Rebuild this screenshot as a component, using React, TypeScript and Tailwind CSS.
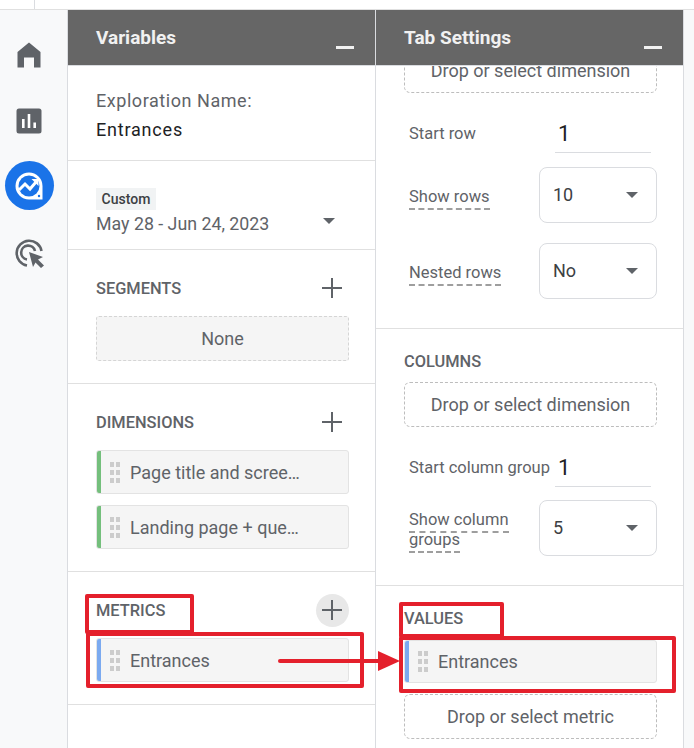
import React from 'react';

const HomeIcon = () => (
  <svg width="24" height="26" viewBox="0 0 24 26" className="text-[#5f6368]">
    <path fill="currentColor" d="M12 0.5 L23.5 10 V25.5 H17 V15.5 H7 V25.5 H0.5 V10 Z" />
  </svg>
);

const ReportsIcon = () => (
  <svg width="26" height="26" viewBox="0 0 26 26">
    <rect x="0.5" y="0.5" width="25" height="25" rx="2.5" fill="#5f6368" />
    <rect x="6" y="11" width="2.6" height="9" fill="#fff" />
    <rect x="11.7" y="6" width="2.6" height="14" fill="#fff" />
    <rect x="17.4" y="14.5" width="2.6" height="5.5" fill="#fff" />
  </svg>
);

const ExploreIcon = () => (
  <svg width="28" height="28" viewBox="0 0 28 28">
    <path fill="#fff" d="M14 0.5 A13.5 13.5 0 0 1 27.5 14 V27.5 H14 A13.5 13.5 0 0 1 14 0.5 Z" />
    <circle cx="14" cy="14" r="10.5" fill="#1a73e8" />
    <path d="M4 18 L10 12 L15 17 L21 10" fill="none" stroke="#fff" strokeWidth="3" />
    <path fill="#fff" d="M16.5 7 H23.5 V14 Z" />
    <circle cx="24" cy="24" r="1.2" fill="#1a73e8" />
  </svg>
);

const AdvertisingIcon = () => (
  <svg width="30" height="30" viewBox="0 0 30 30">
    <path d="M13 27.5 A12.5 12.5 0 1 1 27.5 13" fill="none" stroke="#5f6368" strokeWidth="2.6" />
    <path d="M13 21.5 A7 7 0 1 1 21 13" fill="none" stroke="#5f6368" strokeWidth="2.6" />
    <path fill="#5f6368" d="M15 14 L29 19 L24 21.5 L30 27.5 L27 30 L21.5 24.5 L19 29 Z" />
  </svg>
);

const PlusIcon = () => (
  <svg width="20" height="20" viewBox="0 0 20 20" className="text-[#5f6368]">
    <rect x="0" y="9" width="20" height="2" fill="currentColor" />
    <rect x="9" y="0" width="2" height="20" fill="currentColor" />
  </svg>
);

const Caret = () => (
  <div className="w-0 h-0 border-x-[6.5px] border-x-transparent border-t-[6px] border-t-[#5f6368]" />
);

const DragHandle = () => (
  <div className="grid grid-cols-2 gap-x-[2px] gap-y-[3px] w-[10px] shrink-0">
    {[0, 1, 2, 3, 4, 5].map((i) => (
      <div key={i} className="w-[4px] h-[5px] bg-[#cccccc]" />
    ))}
  </div>
);

const Chip = ({ label, accent, height = 'h-[44px]' }: { label: string; accent: string; height?: string }) => (
  <div className={`flex items-center ${height} w-[253px] bg-[#f5f5f5] border border-[#e3e3e3] rounded-[3px] overflow-hidden`}>
    <div className={`w-[4px] h-full shrink-0 ${accent}`} />
    <div className="ml-[9px] mr-[10px]">
      <DragHandle />
    </div>
    <span className="text-[18px] text-[#5f6368] whitespace-nowrap">{label}</span>
  </div>
);

const PanelHeader = ({ title, z }: { title: string; z?: string }) => (
  <div className={`relative flex h-[56px] bg-[#666666] border-b border-[#dadce0] shrink-0 pl-[28px] ${z ?? ''}`}>
    <span className="mt-[16px] text-[19px] leading-[24px] font-bold text-[#f1f1f1]">{title}</span>
    <div className="absolute left-[268px] top-[36px] w-[18px] h-[3px] bg-[#f1f1f1]" />
  </div>
);

const SectionTitle = ({ children }: { children: React.ReactNode }) => (
  <h3 className="pt-[2px] text-[16.4px] leading-[20px] font-medium text-[#5f6368]">{children}</h3>
);

const DropBox = ({ label }: { label: string }) => (
  <div className="flex items-center justify-center w-[253px] h-[45px] border border-dashed border-[#bdbdbd] rounded-[6px] text-[18px] text-[#5f6368]">
    {label}
  </div>
);

const NumberRow = ({ label, className }: { label: string; className?: string }) => (
  <div className={`flex pl-[5px] h-[39px] ${className ?? ''}`}>
    <span className="w-[146px] pt-[8px] text-[16.5px] leading-[24px] text-[#5f6368] whitespace-nowrap">{label}</span>
    <div className="w-[96px] h-[39px] border-b border-[#dadce0] pl-[3px] text-[22px] leading-[40px] text-[#202124]">1</div>
  </div>
);

const SelectBox = ({ value }: { value: string }) => (
  <div className="flex items-center justify-between w-[118px] h-[56px] border border-[#dadce0] rounded-[8px] pl-[13px] pr-[18px] text-[18px] text-[#3c4043]">
    <span className="-mt-[2px]">{value}</span>
    <Caret />
  </div>
);

const DashedLabel = ({ children }: { children: React.ReactNode }) => (
  <span className="border-b-2 border-dashed border-[#9e9e9e] pb-[2px] text-[16.5px] leading-[18px] text-[#5f6368]">{children}</span>
);

export default function App() {
  return (
    <div className="relative w-[694px] h-[748px] overflow-hidden bg-white font-['Roboto',sans-serif]">
      <div className="h-[10px] border-b border-[#e0e0e0] flex">
        <div className="ml-[34px] w-px h-full bg-[#dadce0]" />
      </div>

      <div className="flex h-[738px]">
        {/* nav rail */}
        <nav className="w-[68px] shrink-0 bg-[#f8f9fa] border-r border-[#dadce0] flex flex-col items-center pr-[9px]">
          <div className="mt-[32px]">
            <HomeIcon />
          </div>
          <div className="mt-[40px]">
            <ReportsIcon />
          </div>
          <div className="mt-[27px] w-[49px] h-[49px] rounded-full bg-[#1a73e8] flex items-center justify-center">
            <ExploreIcon />
          </div>
          <div className="mt-[28px]">
            <AdvertisingIcon />
          </div>
        </nav>

        {/* variables */}
        <section className="w-[308px] shrink-0 border-r border-[#dadce0] flex flex-col">
          <PanelHeader title="Variables" />
          <div className="h-[95px] border-b border-[#e0e0e0] pl-[28px] pt-[20px] text-[18px] leading-[29px]">
            <div className="text-[#5f6368] tracking-[0.55px]">Exploration Name:</div>
            <div className="text-[#202124] tracking-[0.8px]">Entrances</div>
          </div>
          <div className="relative h-[89px] border-b border-[#e0e0e0] pl-[28px] pt-[27px]">
            <span className="inline-block w-[60px] h-[22px] bg-[#f1f3f4] text-center text-[14px] leading-[22px] font-medium text-[#3c4043] align-top">Custom</span>
            <div className="text-[17.8px] leading-[24px] text-[#5f6368]">May 28 - Jun 24, 2023</div>
            <div className="absolute left-[255px] top-[57px]">
              <Caret />
            </div>
          </div>
          <div className="h-[134px] border-b border-[#e0e0e0] pl-[28px]">
            <div className="flex items-center justify-between w-[246px] h-[20px] mt-[28px]">
              <SectionTitle>SEGMENTS</SectionTitle>
              <PlusIcon />
            </div>
            <div className="flex items-center justify-center mt-[18px] w-[253px] h-[45px] bg-[#f5f5f5] border border-dashed border-[#d5d5d5] rounded-[3px] text-[18px] text-[#5f6368]">None</div>
          </div>
          <div className="h-[188px] border-b border-[#e0e0e0] pl-[28px]">
            <div className="flex items-center justify-between w-[246px] h-[20px] mt-[28px]">
              <SectionTitle>DIMENSIONS</SectionTitle>
              <PlusIcon />
            </div>
            <div className="mt-[18px] flex flex-col gap-[11px]">
              <Chip label="Page title and scree…" accent="bg-[#74bf7c]" />
              <Chip label="Landing page + que…" accent="bg-[#74bf7c]" />
            </div>
          </div>
          <div className="h-[133px] border-b border-[#e0e0e0] pl-[28px]">
            <div className="flex items-center justify-between w-[246px] h-[20px] mt-[28px]">
              <SectionTitle>METRICS</SectionTitle>
              <div className="relative w-[20px] h-[20px] flex items-center justify-center">
                <div className="absolute -inset-[6.5px] rounded-full bg-[#e8e8e8]" />
                <div className="relative flex">
                  <PlusIcon />
                </div>
              </div>
            </div>
            <div className="mt-[18px]">
              <Chip label="Entrances" accent="bg-[#7baaf0]" />
            </div>
          </div>
        </section>

        {/* tab settings */}
        <section className="w-[308px] shrink-0 border-r border-[#dadce0] flex flex-col overflow-hidden">
          <PanelHeader title="Tab Settings" z="z-10" />
          <div className="pl-[28px] -mt-[18px] h-[281px] border-b border-[#e0e0e0] -mb-px">
            <DropBox label="Drop or select dimension" />
            <NumberRow label="Start row" className="mt-[21px]" />
            <div className="flex items-center mt-[14px]">
              <div className="w-[135px] pl-[5px] pt-[3px]">
                <DashedLabel>Show rows</DashedLabel>
              </div>
              <SelectBox value="10" />
            </div>
            <div className="flex items-center mt-[20px]">
              <div className="w-[135px] pl-[5px] pt-[3px]">
                <DashedLabel>Nested rows</DashedLabel>
              </div>
              <SelectBox value="No" />
            </div>
          </div>
          <div className="pl-[28px] h-[257px] border-b border-[#e0e0e0] mt-px">
            <div className="mt-[21px]">
              <SectionTitle>COLUMNS</SectionTitle>
            </div>
            <div className="mt-[10px]">
              <DropBox label="Drop or select dimension" />
            </div>
            <NumberRow label="Start column group" className="mt-[21px]" />
            <div className="flex items-center mt-[13px]">
              <div className="w-[135px] pl-[5px] pt-[4px] leading-[20px]">
                <DashedLabel>Show column</DashedLabel>
                <br />
                <DashedLabel>groups</DashedLabel>
              </div>
              <SelectBox value="5" />
            </div>
          </div>
          <div className="pl-[28px]">
            <div className="mt-[21px]">
              <SectionTitle>VALUES</SectionTitle>
            </div>
            <div className="mt-[11px]">
              <Chip label="Entrances" accent="bg-[#7baaf0]" height="h-[43px]" />
            </div>
            <div className="mt-[11px]">
              <DropBox label="Drop or select metric" />
            </div>
          </div>
        </section>

        <div className="flex-1 bg-[#f8f9fa]" />
      </div>

      {/* red annotations */}
      <div className="absolute left-[85px] top-[594px] w-[109px] h-[40px] border-[4px] border-[#e4202c] rounded-[2px]" />
      <div className="absolute left-[86px] top-[632px] w-[278px] h-[56px] border-[4px] border-[#e4202c] rounded-[2px]" />
      <div className="absolute left-[399px] top-[602px] w-[105px] h-[36px] border-[4px] border-[#e4202c] rounded-[2px]" />
      <div className="absolute left-[399px] top-[636px] w-[277px] h-[57px] border-[4px] border-[#e4202c] rounded-[2px]" />
      <div className="absolute left-[278px] top-[659px] w-[102px] h-[4px] bg-[#e4202c] rounded-full" />
      <div className="absolute left-[378px] top-[651px] w-0 h-0 border-y-[10px] border-y-transparent border-l-[22px] border-l-[#e4202c]" />
    </div>
  );
}
